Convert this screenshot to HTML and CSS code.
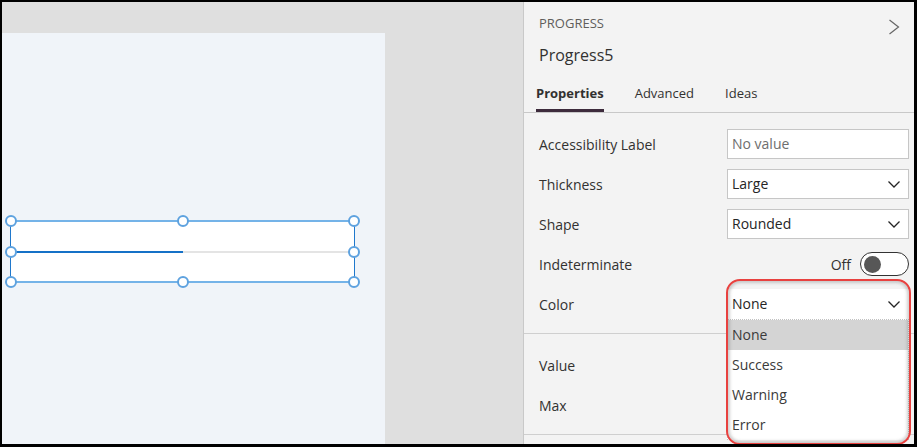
FILE: index.html
```html
<!DOCTYPE html>
<html lang="en">
<head>
<meta charset="utf-8">
<title>Progress properties</title>
<link rel="stylesheet" href="styles.css">
</head>
<body>
<div class="frame">
  <main class="canvas-area">
    <div class="screen">
      <div class="selection">
        <div class="bar"><div class="bar-fill" style="width:50%"></div></div>
        <span class="handle h-tl"></span>
        <span class="handle h-tc"></span>
        <span class="handle h-tr"></span>
        <span class="handle h-ml"></span>
        <span class="handle h-mr"></span>
        <span class="handle h-bl"></span>
        <span class="handle h-bc"></span>
        <span class="handle h-br"></span>
      </div>
    </div>
  </main>
  <aside class="panel">
    <header class="panel-head">
      <div class="ctrl-type">PROGRESS</div>
      <div class="ctrl-name">Progress5</div>
      <svg class="collapse" width="12" height="16" viewBox="0 0 12 16"><path d="M1.5 1 L10.5 8 L1.5 15" fill="none" stroke="#666" stroke-width="1.2"/></svg>
    </header>
    <nav class="tabs">
      <span class="tab active">Properties</span>
      <span class="tab">Advanced</span>
      <span class="tab">Ideas</span>
    </nav>
    <section class="group">
      <div class="row">
        <span class="label">Accessibility Label</span>
        <div class="field placeholder">No value</div>
      </div>
      <div class="row">
        <span class="label">Thickness</span>
        <div class="field select">Large<svg class="caret" width="12" height="7" viewBox="0 0 12 7"><path d="M0.5 0.5 L6 6 L11.5 0.5" fill="none" stroke="#252525" stroke-width="1.3"/></svg></div>
      </div>
      <div class="row">
        <span class="label">Shape</span>
        <div class="field select">Rounded<svg class="caret" width="12" height="7" viewBox="0 0 12 7"><path d="M0.5 0.5 L6 6 L11.5 0.5" fill="none" stroke="#252525" stroke-width="1.3"/></svg></div>
      </div>
      <div class="row">
        <span class="label">Indeterminate</span>
        <div class="toggle-wrap"><span class="toggle-text">Off</span><span class="toggle"><span class="knob"></span></span></div>
      </div>
      <div class="row">
        <span class="label">Color</span>
        <div class="combo">
          <div class="field select open">None<svg class="caret" width="12" height="7" viewBox="0 0 12 7"><path d="M0.5 0.5 L6 6 L11.5 0.5" fill="none" stroke="#252525" stroke-width="1.3"/></svg></div>
          <ul class="options">
            <li class="selected">None</li>
            <li>Success</li>
            <li>Warning</li>
            <li>Error</li>
          </ul>
          <div class="callout"></div>
        </div>
      </div>
    </section>
    <section class="group">
      <div class="row"><span class="label">Value</span></div>
      <div class="row"><span class="label">Max</span></div>
    </section>
  </aside>
</div>
</body>
</html>
```
FILE: styles.css
```css
* { box-sizing: border-box; }
html, body { margin: 0; padding: 0; }
body {
  background: #000;
  font-family: "Open Sans", "Noto Sans", sans-serif;
  color: #323130;
}
.frame {
  width: 917px;
  height: 447px;
  border-style: solid;
  border-color: #000;
  border-width: 2px 3px 3px 2px;
  display: flex;
  overflow: hidden;
}
.canvas-area {
  flex: 0 0 521px;
  background: #dfdfdf;
  padding-top: 31px;
}
.screen {
  width: 383px;
  height: 100%;
  background: #f0f4f9;
  position: relative;
}
.selection {
  position: absolute;
  left: 8px;
  top: 187px;
  width: 345px;
  height: 63px;
  background: #fff;
  border-top: 2px solid #74b3e8;
  border-bottom: 2px solid #74b3e8;
  border-left: 1.5px solid #1f78cc;
  border-right: 1.5px solid #1f78cc;
  display: flex;
  align-items: center;
}
.bar {
  width: 100%;
  height: 2px;
  background: #e4e4e4;
}
.bar-fill {
  height: 100%;
  background: #1571c7;
}
.handle {
  position: absolute;
  width: 12px;
  height: 12px;
  border: 2px solid #5ea2df;
  border-radius: 50%;
  background: #fff;
  transform: translate(-50%, -50%);
}
.h-tl { left: 0; top: -1px; }
.h-tc { left: 50%; top: -1px; }
.h-tr { left: 100%; top: -1px; }
.h-ml { left: 0; top: 50%; }
.h-mr { left: 100%; top: 50%; }
.h-bl { left: 0; top: calc(100% + 1px); }
.h-bc { left: 50%; top: calc(100% + 1px); }
.h-br { left: 100%; top: calc(100% + 1px); }

.panel {
  flex: 1;
  background: #f3f3f3;
  border-left: 1px solid #c9c9c9;
  overflow: hidden;
  display: flex;
  flex-direction: column;
}
.panel-head {
  position: relative;
  padding: 12px 15px 0 15px;
}
.ctrl-type {
  font-size: 13px;
  line-height: 18px;
  color: #605e5c;
}
.ctrl-name {
  font-size: 16px;
  line-height: 22px;
  margin-top: 12px;
  color: #323130;
}
.collapse {
  position: absolute;
  right: 14px;
  top: 17px;
}
.tabs {
  display: flex;
  gap: 31px;
  padding: 18px 15px 0 12px;
  border-bottom: 1px solid #c8c8c8;
}
.tab {
  font-size: 13px;
  line-height: 18px;
  padding-bottom: 7px;
  border-bottom: 3px solid transparent;
  color: #323130;
}
.tab.active {
  font-weight: 700;
  border-bottom-color: #3d2b3c;
}
.group {
  padding: 11px 5px 9px 15px;
  border-bottom: 1px solid #cfcfcf;
}
.row {
  height: 40px;
  display: flex;
  align-items: center;
  justify-content: space-between;
}
.label {
  font-size: 14px;
  color: #323130;
}
.field {
  width: 182px;
  height: 30px;
  background: #fff;
  border: 1px solid #c6c6c6;
  font-size: 14px;
  line-height: 28px;
  padding: 0 4px;
  color: #252525;
  display: flex;
  align-items: center;
  justify-content: space-between;
}
.field.placeholder { color: #6e6e6e; }
.field.open { border-color: #fff; }
.caret { margin-right: 4px; }
.toggle-wrap {
  display: flex;
  align-items: center;
  gap: 9px;
}
.toggle-text {
  font-size: 14px;
  color: #323130;
}
.toggle {
  width: 49px;
  height: 24px;
  border: 1px solid #333;
  border-radius: 12px;
  display: flex;
  align-items: center;
  padding-left: 3px;
  background: #fff;
}
.knob {
  width: 17px;
  height: 17px;
  border-radius: 50%;
  background: #575757;
}
.combo {
  position: relative;
  width: 182px;
}
.combo .field { width: 100%; }
.options {
  position: absolute;
  left: 0;
  top: 100%;
  width: 100%;
  margin: 0;
  padding: 0;
  list-style: none;
  background: #fff;
  border-left: 1px dotted #c2c2c2;
  border-right: 1px dotted #c2c2c2;
  border-top: 1px dotted #c2c2c2;
}
.options li {
  height: 30px;
  line-height: 30px;
  padding-left: 4px;
  font-size: 14px;
  color: #3a3a3a;
}
.options li.selected { background: #d4d4d4; }
.callout {
  position: absolute;
  left: -1px;
  top: -10px;
  width: 185px;
  height: 166px;
  border: 2px solid #e8413f;
  border-radius: 14px;
  box-shadow: inset 0 0 3px 2px rgba(120,120,120,0.35);
  pointer-events: none;
}
```
